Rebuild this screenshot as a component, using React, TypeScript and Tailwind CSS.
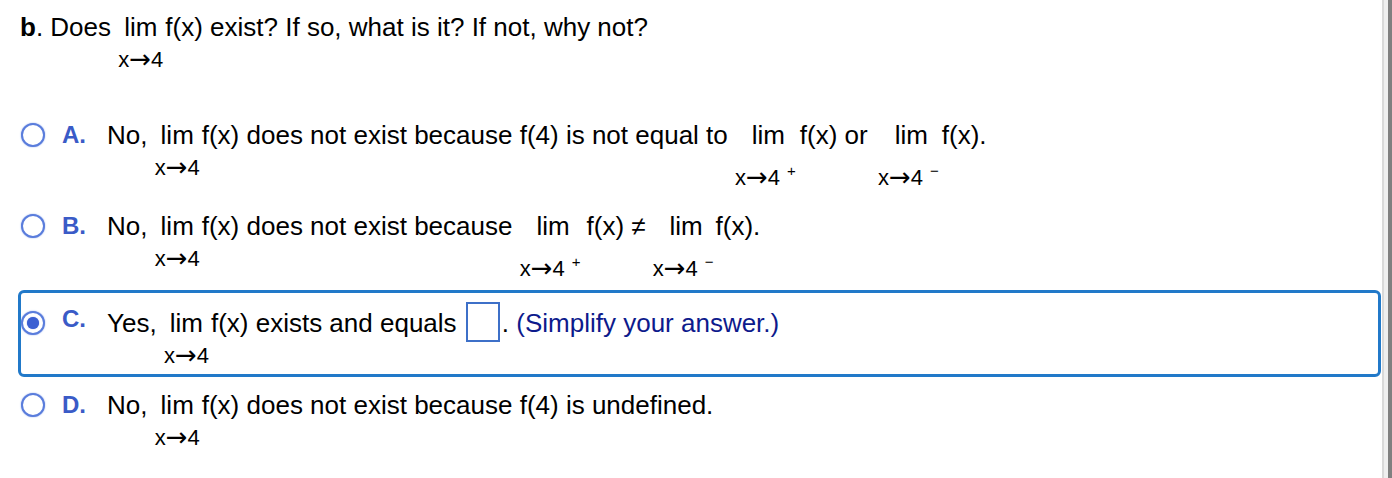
import React from 'react'

const FONT = "font-['Liberation_Sans',Arial,sans-serif]"

function Lim({ side, to = '4' }: { side?: '+' | '-'; to?: string }) {
  return (
    <span className="inline-flex flex-col items-center">
      <span className={`leading-[30px] ${side ? 'pl-[6px]' : ''}`}>lim</span>
      <span className={`text-[22px] leading-[26px] whitespace-nowrap ${side ? 'mt-[15px]' : 'mt-[5px]'}`}>
        x<span className="relative top-[1px] font-['DejaVu_Sans',sans-serif] text-[26px] leading-[0]">→</span>
        {to}
        {side && (
          <span className="relative -top-[9px] ml-[7px] text-[15px] leading-[0]">{side === '+' ? '+' : '−'}</span>
        )}
      </span>
    </span>
  )
}

function T({ children, className = '' }: { children: React.ReactNode; className?: string }) {
  return <span className={`leading-[30px] whitespace-pre ${className}`}>{children}</span>
}

function Radio({ checked }: { checked?: boolean }) {
  return (
    <span className="mt-[3px] flex h-[24px] w-[24px] shrink-0 items-center justify-center rounded-full border-[2.5px] border-[#5a7ddc] bg-white shadow-[0_0_1.5px_#7f9ae6]">
      {checked && <span className="h-[12px] w-[12px] rounded-full bg-[#3b5fd2] shadow-[0_0_1px_#3b5fd2]" />}
    </span>
  )
}

function Option({
  letter,
  checked,
  className = '',
  children,
}: {
  letter: string
  checked?: boolean
  className?: string
  children: React.ReactNode
}) {
  return (
    <div
      className={`rounded-[6px] border-[3px] pb-[5px] pt-[15px] ${
        checked ? 'border-[#2179c9]' : 'border-transparent'
      } ${className}`}
    >
      <div className="flex items-start">
        <Radio checked={checked} />
        <span
          className={`ml-[17px] w-[45px] shrink-0 text-[24px] font-bold leading-[30px] text-[#3a5bc7] ${
            checked ? 'relative -top-[4px]' : ''
          }`}
        >
          {letter}
        </span>
        <div className="flex items-start">{children}</div>
      </div>
    </div>
  )
}

export default function App() {
  return (
    <div className={`flex h-[478px] w-[1392px] overflow-hidden bg-white text-[26px] text-black ${FONT}`}>
      <div className="flex-1 pl-[18px] pr-[1px] pt-[12px]">
        {/* Question */}
        <div className="flex items-start pl-[2px]">
          <T>
            <span className="font-bold">b</span>. Does{' '}
          </T>
          <Lim />
          <T className="ml-[2px]">f(x) exist? If so, what is it? If not, why not?</T>
        </div>

        <Option letter="A." className="mt-[29px]">
          <T>No, </T>
          <Lim />
          <T className="ml-[2px]">f(x) does not exist because f(4) is not equal to </T>
          <Lim side="+" />
          <T className="ml-[4px] pr-[3px]">f(x) or </T>
          <Lim side="-" />
          <T className="ml-[3px]">f(x).</T>
        </Option>

        <Option letter="B." className="-mt-[6px]">
          <T>No, </T>
          <Lim />
          <T className="ml-[2px]">f(x) does not exist because </T>
          <Lim side="+" />
          <T className="ml-[6px]">f(x) ≠ </T>
          <Lim side="-" />
          <T className="ml-[2px]">f(x).</T>
        </Option>

        <Option letter="C." checked>
          <T>Yes, </T>
          <Lim />
          <T className="ml-[2px]">f(x) exists and equals </T>
          <span className="-mt-[6px] ml-[2px] h-[40px] w-[34px] shrink-0 border-2 border-[#3d70c8] bg-white" />
          <T className="ml-[2px]">.</T>
          <T>
            <span className="text-[#0d1a8c]"> (Simplify your answer.)</span>
          </T>
        </Option>

        <Option letter="D." className="-mt-[5px]">
          <T>No, </T>
          <Lim />
          <T className="ml-[2px]">f(x) does not exist because f(4) is undefined.</T>
        </Option>
      </div>

      {/* scrollbar edge */}
      <div className="flex h-full w-[10px] shrink-0">
        <div className="w-[2px] bg-[#d9d9d9]" />
        <div className="w-[4px] bg-[#efefef]" />
        <div className="w-[4px] bg-[#808080]" />
      </div>
    </div>
  )
}
